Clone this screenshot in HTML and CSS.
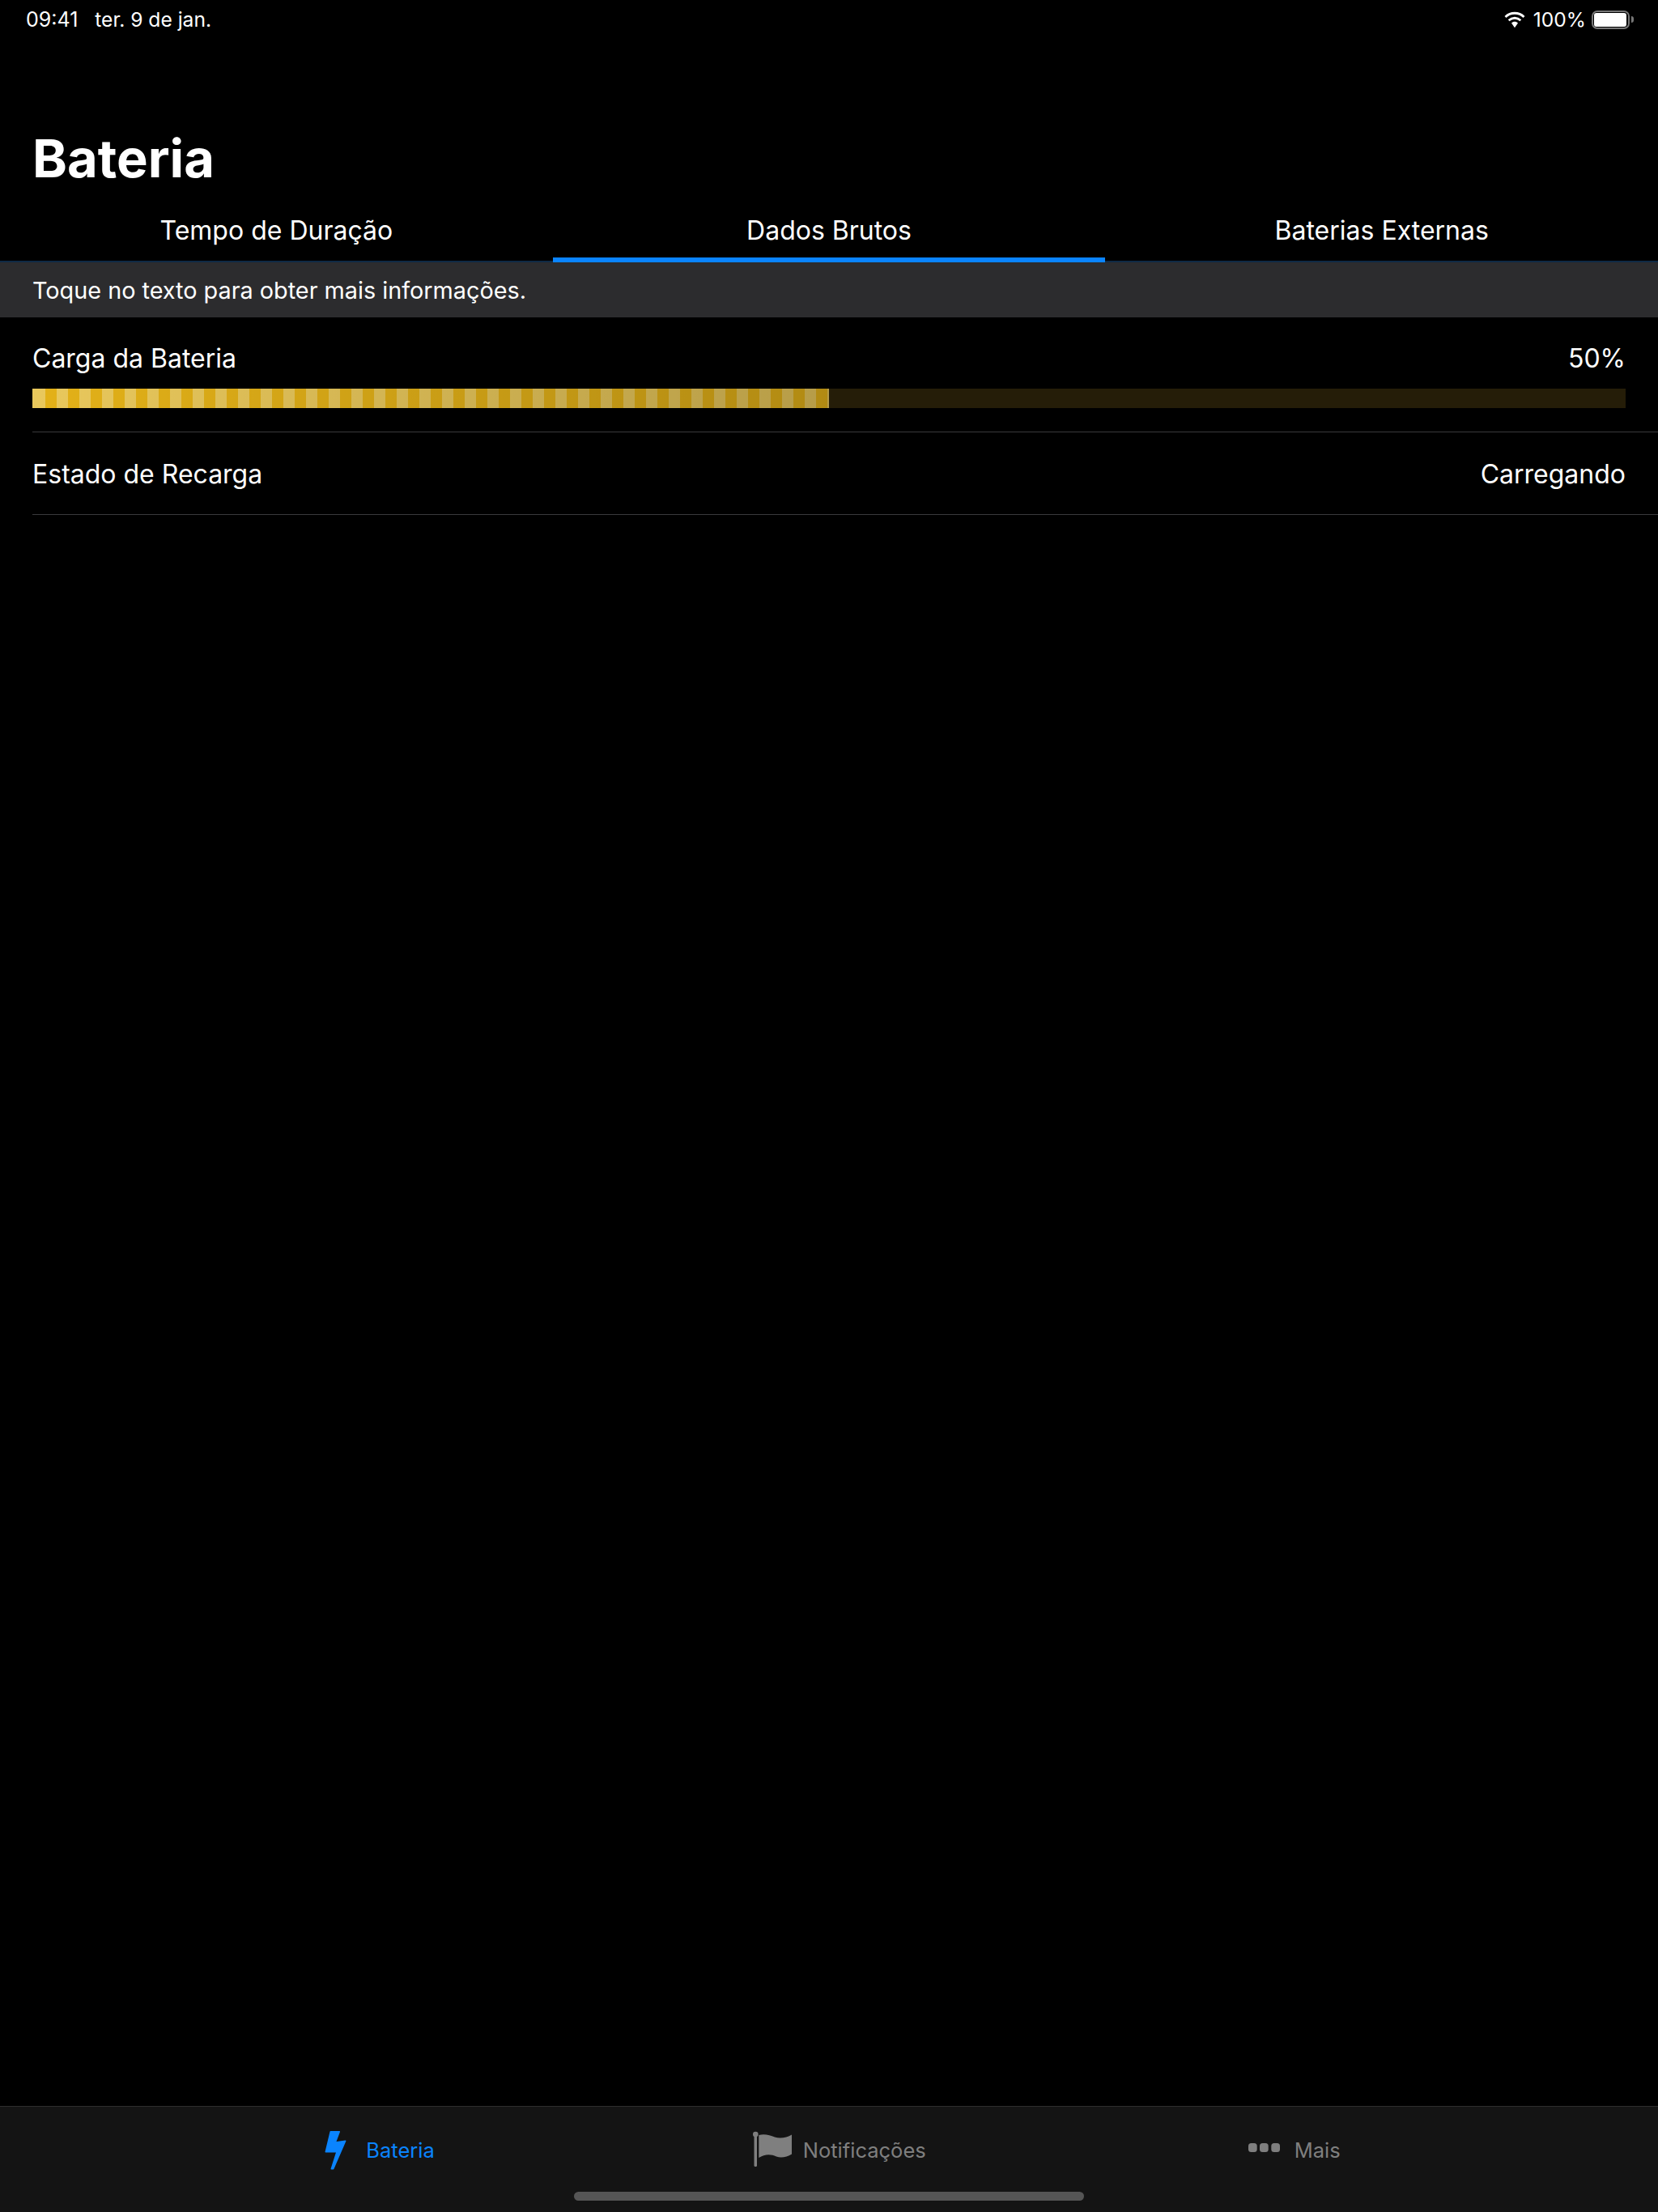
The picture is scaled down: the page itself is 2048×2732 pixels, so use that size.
FILE: index.html
```html
<!DOCTYPE html>
<html lang="pt-BR">

<head>
    <meta charset="UTF-8">
    <title>Bateria</title>
    <link rel="stylesheet" href="styles.css">
</head>

<body>
    <div class="status-bar">
        <div class="status-left">
            <span class="status-time">09:41</span>
            <span>ter. 9 de jan.</span>
        </div>
        <div class="status-right">
            <svg class="wifi" width="30" height="21" viewBox="0 0 28 20">
                <path d="M14 3.600c3.900 0 7.400 1.500 10 4l1.900-2A17.200 17.200 0 0 0 14 .8 17.200 17.200 0 0 0 2.100 5.600l1.900 2c2.600-2.500 6.100-4 10-4z" fill="#fff"/>
                <path d="M14 9.300c2.300 0 4.400.9 6 2.400l1.900-2A14 14 0 0 0 14 6.500a14 14 0 0 0-7.900 3.200l1.900 2c1.600-1.500 3.700-2.400 6-2.400z" fill="#fff"/>
                <path d="M14 12.200c-1.500 0-2.800.6-3.800 1.500L14 19.400l3.800-5.700c-1-.9-2.300-1.500-3.800-1.500z" fill="#fff"/>
            </svg>
            <span class="battery-pct">100%</span>
            <div class="battery">
                <div class="battery-body"><div class="battery-level"></div></div>
                <div class="battery-nub"></div>
            </div>
        </div>
    </div>

    <h1 class="title">Bateria</h1>

    <div class="tabs">
        <div class="tab">Tempo de Duração</div>
        <div class="tab active">Dados Brutos</div>
        <div class="tab">Baterias Externas</div>
    </div>

    <div class="hint">Toque no texto para obter mais informações.</div>

    <main class="content">
        <div class="row row-charge">
            <div class="row-line">
                <span>Carga da Bateria</span>
                <span>50%</span>
            </div>
            <div class="meter">
                <div class="meter-fill"></div>
            </div>
        </div>
        <div class="row row-state">
            <div class="row-line">
                <span>Estado de Recarga</span>
                <span>Carregando</span>
            </div>
        </div>
    </main>

    <footer class="tabbar">
        <nav class="tabbar-items">
            <div class="tabbar-item current">
                <svg width="60" height="60" viewBox="0 0 60 60">
                    <path d="M24.300 7.700H35.300L30.300 21L42.700 19.300L27.700 53.700H25.300L32 32.700H18.300Z" fill="#0a84ff" stroke="#0a84ff" stroke-width="1.500" stroke-linejoin="round"/>
                </svg>
                <span>Bateria</span>
            </div>
            <div class="tabbar-item">
                <svg width="60" height="60" viewBox="0 0 60 60">
                    <rect x="7.500" y="10" width="3.500" height="41" rx="1.500" fill="#7f7f7f"/>
                    <circle cx="9.300" cy="11" r="3.300" fill="#7f7f7f"/>
                    <path d="M13.300 12C20 10 27 12 33 14.500C40 17 48 15 54 11.500V35.500C48 39 41 41 35 38.500C28 35 20 35.500 13.300 40Z" fill="#7f7f7f"/>
                </svg>
                <span>Notificações</span>
            </div>
            <div class="tabbar-item">
                <svg width="60" height="60" viewBox="0 0 60 60">
                    <rect x="11" y="22" width="10.700" height="11" rx="3.500" fill="#7f7f7f"/>
                    <rect x="25" y="22" width="10.700" height="11" rx="3.500" fill="#7f7f7f"/>
                    <rect x="39.300" y="22" width="10.700" height="11" rx="3.500" fill="#7f7f7f"/>
                </svg>
                <span>Mais</span>
            </div>
        </nav>
        <div class="home-indicator"></div>
    </footer>
</body>

</html>
```

FILE: styles.css
```css
* {
    box-sizing: border-box;
}

body {
    margin: 0;
    height: 2732px;
    display: flex;
    flex-direction: column;
    background-color: #000;
    color: #fff;
    font-family: Inter, "Liberation Sans", sans-serif;
}

.status-bar {
    display: flex;
    justify-content: space-between;
    align-items: center;
    height: 48px;
    padding: 0 30px 0 32px;
    font-size: 24.6px;
}

.status-left {
    display: flex;
    gap: 21px;
}

.status-time {
    font-size: 25px;
}

.status-right {
    display: flex;
    align-items: center;
}

.wifi {
    margin-right: 8px;
}

.battery-pct {
    margin-right: 7px;
}

.battery {
    display: flex;
    align-items: center;
}

.battery-body {
    width: 47px;
    height: 23px;
    padding: 1px 2px 1px 1px;
    border: 2px solid #777;
    border-radius: 7px;
}

.battery-level {
    height: 100%;
    background-color: #fff;
    border-radius: 3px;
}

.battery-nub {
    width: 3px;
    height: 8px;
    margin-left: 2px;
    background-color: #777;
    border-radius: 0 3px 3px 0;
}

.title {
    margin: 108px 0 0;
    padding-left: 40px;
    font-size: 65px;
    font-weight: 700;
    line-height: 80px;
}

.tabs {
    display: flex;
    height: 88px;
    border-bottom: 2px solid #0f2a45;
}

.tab {
    flex: 1;
    padding-top: 26px;
    font-size: 32px;
    line-height: 46px;
    text-align: center;
}

.tab.active {
    height: 88px;
    border-bottom: 6px solid #0a84ff;
}

.hint {
    height: 68px;
    padding-left: 40px;
    background-color: #2c2c2e;
    font-size: 28.8px;
    line-height: 70px;
}

.content {
    flex: 1;
    padding-left: 40px;
}

.row {
    border-bottom: 1px solid #3a3a3c;
    font-size: 32px;
}

.row-line {
    display: flex;
    justify-content: space-between;
    padding-right: 40px;
    line-height: 44px;
}

.row-charge {
    height: 142px;
    padding-top: 29px;
}

.row-state {
    height: 102px;
    padding-top: 30px;
}

.meter {
    height: 24px;
    margin: 15px 40px 0 0;
    background-color: #251d08;
}

.meter-fill {
    width: 50%;
    height: 100%;
    background-image:
        linear-gradient(90deg, rgba(0, 0, 0, 0), rgba(0, 0, 0, 0.22)),
        linear-gradient(#e9c85c, #e9c85c),
        linear-gradient(90deg, #e9c85c 50%, #e3b118 50%);
    background-size: 100% 100%, 2px 100%, 28px 100%;
    background-position: 0 0, 0 0, 2px 0;
    background-repeat: no-repeat, no-repeat, repeat-x;
}

.tabbar {
    height: 131px;
    padding-top: 23px;
    background-color: #141414;
    border-top: 1px solid #2e2e2e;
}

.tabbar-items {
    display: flex;
    justify-content: center;
    gap: 387px;
    padding-right: 8px;
}

.tabbar-item {
    display: flex;
    align-items: center;
    gap: 8px;
    color: #7f7f7f;
    font-size: 25.5px;
}

.tabbar-item.current {
    color: #0a84ff;
}

.home-indicator {
    width: 630px;
    height: 11px;
    margin: 22px auto 0;
    background-color: #555;
    border-radius: 6px;
}
```
